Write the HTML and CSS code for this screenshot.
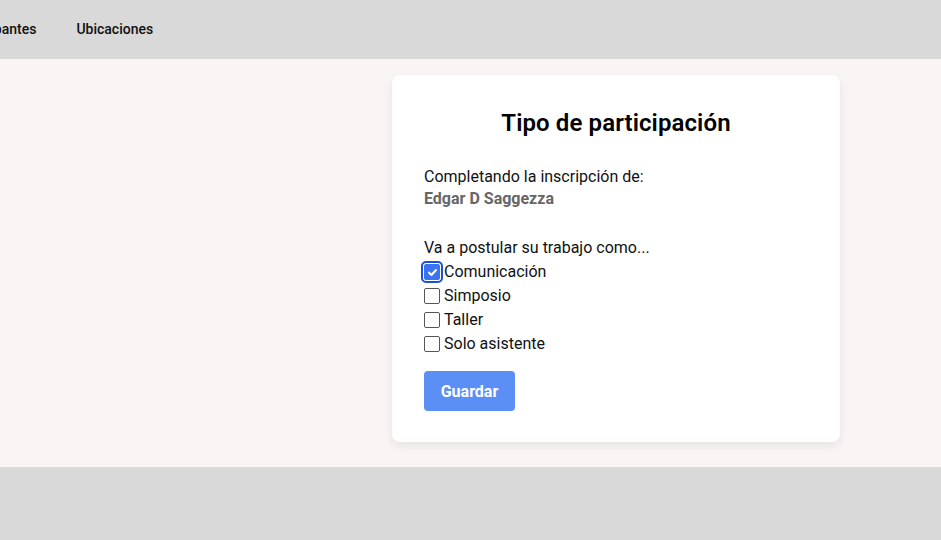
FILE: index.html
```html
<!DOCTYPE html>
<html lang="es">
<head>
<meta charset="utf-8">
<link rel="stylesheet" href="styles.css">
</head>
<body>
<header class="topbar">
  <nav class="nav">
    <a class="nav-link" href="#">Participantes</a>
    <a class="nav-link" href="#">Ubicaciones</a>
  </nav>
</header>
<main class="main">
  <section class="card">
    <h1 class="title">Tipo de participación</h1>
    <p class="label">Completando la inscripción de:</p>
    <p class="name">Edgar D Saggezza</p>
    <p class="question">Va a postular su trabajo como...</p>
    <ul class="options">
      <li class="option"><span class="box box-checked focused"><svg viewBox="0 0 12 12" width="11" height="11"><path d="M2.3 6.2 4.9 8.7 9.8 3.3" fill="none" stroke="#fff" stroke-width="2.2" stroke-linecap="round" stroke-linejoin="round"/></svg></span>Comunicación</li>
      <li class="option"><span class="box"></span>Simposio</li>
      <li class="option"><span class="box"></span>Taller</li>
      <li class="option"><span class="box"></span>Solo asistente</li>
    </ul>
    <button class="btn">Guardar</button>
  </section>
</main>
<footer class="bottom"></footer>
</body>
</html>
```
FILE: styles.css
```css
* { box-sizing: border-box; }
html, body { margin: 0; padding: 0; }
body {
  font-family: Roboto, "Liberation Sans", sans-serif;
  background: #d9d9d9;
  color: #111;
  width: 941px;
  height: 540px;
  overflow: hidden;
}
.topbar {
  height: 59px;
  background: #d9d9d9;
  display: flex;
  align-items: center;
  padding-bottom: 2px;
}
.nav {
  display: flex;
  gap: 40px;
  margin-left: -47px;
}
.nav-link {
  font-size: 14px;
  font-weight: 500;
  color: #111;
  text-decoration: none;
}
.main {
  background: #f8f5f4;
  height: 408px;
  display: flex;
  padding: 16px 0 0 392px;
}
.card {
  width: 448px;
  height: 367px;
  background: #fff;
  border-radius: 8px;
  box-shadow: 0 4px 10px rgba(0,0,0,0.08);
  padding: 32px 32px 0 32px;
}
.title {
  margin: 0;
  text-align: center;
  font-size: 24px;
  font-weight: 600;
  line-height: 32px;
  letter-spacing: 0.1px;
  color: #000;
}
.label {
  margin: 26px 0 0;
  font-size: 16px;
  line-height: 24px;
}
.name {
  margin: 0;
  font-size: 16px;
  font-weight: 700;
  color: #666;
  line-height: 20px;
}
.question {
  margin: 27px 0 0;
  font-size: 16px;
  line-height: 24px;
}
.options { list-style: none; margin: 0; padding: 0; }
.option {
  display: flex;
  align-items: center;
  gap: 4px;
  font-size: 16px;
  line-height: 24px;
}
.box {
  width: 16px;
  height: 16px;
  border: 1px solid #555;
  border-radius: 2px;
  background: #fff;
  display: inline-flex;
  align-items: center;
  justify-content: center;
}
.box-checked {
  background: #3b74ee;
  border-color: #3b74ee;
}
.focused {
  outline: 2px solid #1d4ed8;
  outline-offset: 1px;
}
.btn {
  margin-top: 15px;
  width: 91px;
  height: 40px;
  border: 0;
  border-radius: 4px;
  background: #5b8ff5;
  color: #fff;
  font-family: inherit;
  font-size: 16px;
  font-weight: 700;
}
.bottom { height: 73px; background: #d9d9d9; }
```
